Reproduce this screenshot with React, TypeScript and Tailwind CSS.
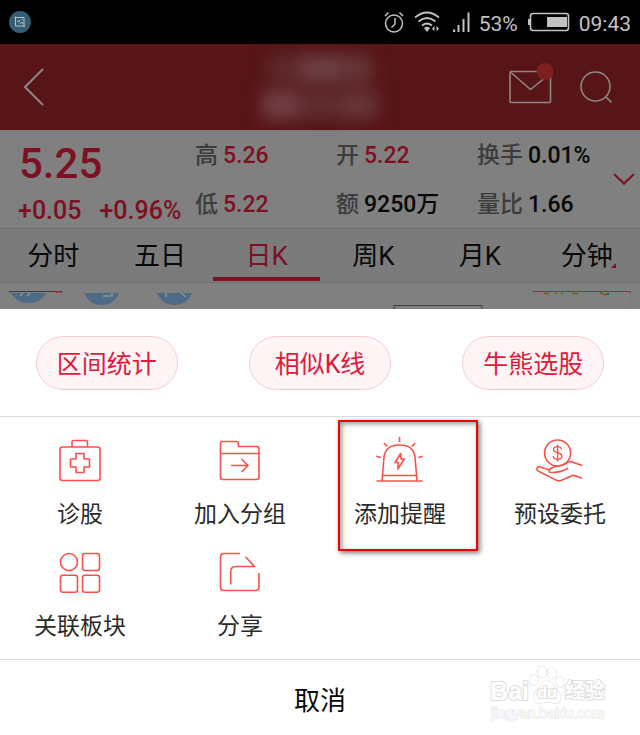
import React from "react";

const actions = [
  { id: "diagnose", label: "诊股" },
  { id: "group", label: "加入分组" },
  { id: "alert", label: "添加提醒", highlighted: true },
  { id: "order", label: "预设委托" },
  { id: "blocks", label: "关联板块" },
  { id: "share", label: "分享" },
];

const quotes = [
  { label: "高", value: "5.26", up: true },
  { label: "开", value: "5.22", up: true },
  { label: "换手", value: "0.01%", up: false },
  { label: "低", value: "5.22", up: true },
  { label: "额", value: "9250万", up: false },
  { label: "量比", value: "1.66", up: false },
];

const tabs = ["分时", "五日", "日K", "周K", "月K", "分钟"];

const shortcuts = ["区间统计", "相似K线", "牛熊选股"];

const ActionIcon = ({ id }: { id: string }) => (
  <svg
    viewBox="0 0 48 48"
    className="w-12 h-12 overflow-visible"
    fill="none"
    stroke="#fb5048"
    strokeWidth="1.6"
    strokeLinejoin="round"
    aria-hidden="true"
  >
    {id === "diagnose" && (
      <>
        <rect x="4" y="10" width="40" height="33.5" rx="2.5" />
        <path d="M16 10V5q0-1.500 1.500-1.500h12.500q1.500 0 1.500 1.500v5" />
        <path d="M20 16.500h8v5.500h5.500v8H28v5.500h-8V30h-5.500v-8H20z" />
      </>
    )}
    {id === "group" && (
      <>
        <path d="M4.500 16.500V6.500q0-2 2-2h14q2 0 2 2v3h18q2.500 0 2.500 2.500v28q0 2.500-2.500 2.500H7q-2.500 0-2.500-2.500zH43" />
        <path d="M15 28.500h17M25.500 22l6.500 6.500-6.500 6.500" />
      </>
    )}
    {id === "alert" && (
      <>
        <path d="M.5 44h46M6.500 38.500h34M6 44l2-24C9 12 15 8 23.500 8S38 12 39 20l2 24" />
        <path d="M24.700 16.500l-5.700 9h3.300l-.5 6.500 6.400-10H25z" />
        <path d="M23.500 0v5M8 6l3 3.500M39 6l-3 3.500M.3 19.300l4.400 1.200M46.700 19.300l-4.400 1.200" />
      </>
    )}
    {id === "order" && (
      <>
        <circle cx="21.6" cy="16" r="13" />
        <path
          d="M25.700 12.600c-.3-2-2-3-4.200-3s-4 1-4 3c0 4.200 8.400 2 8.400 6.500 0 2.100-1.900 3.300-4.200 3.300s-4.300-1.100-4.500-3.400M21.600 7.500v17"
          strokeWidth="1.4"
        />
        <path d="M46.300 28.500L34.500 24.500c-3 0-4.500 2-7.500 3.300-4 1.200-8 1.200-11.500 3.200-2.500 1.600-3 4-1.500 4.300 7 .7 13-1 18-4" />
        <path d="M13.500 33L3.500 29.700c-2.500-.5-3.500 2.500-1.800 4L19 42.600c2.500 1.500 3.500 1.800 6 .9L36 38.700c1.500-.5 2.500-.4 4 .2l6 2.400" />
      </>
    )}
    {id === "blocks" && (
      <>
        <circle cx="13" cy="13" r="8.500" />
        <rect x="26.500" y="4.500" width="17" height="17" rx="2.500" />
        <rect x="4.500" y="26.200" width="17" height="17" rx="2.500" />
        <rect x="26.500" y="26.200" width="17" height="17" rx="2.500" />
      </>
    )}
    {id === "share" && (
      <>
        <path d="M24 4.500H7.500q-3 0-3 3v31q0 3 3 3h32.500q3 0 3-3V24" />
        <path d="M29.500 7.700l9 9.800H20q-5.300 0-5.300 5.300v12.700" />
      </>
    )}
  </svg>
);

const StatusBar = () => (
  <div className="flex items-center h-11 px-[9px] bg-black text-[#c2c2c2]">
    <svg viewBox="0 0 22 22" className="w-[22px] h-[22px]" fill="none" aria-hidden="true">
      <circle cx="11" cy="11" r="11" fill="#355e74" />
      <path
        d="M6.500 5.500v9.500h9.500M5.500 6.500h9.500v9.500M8 10l2 1 1-2M11 13l2-2 1 2M12.500 8.500h1"
        stroke="#b5c2c8"
      />
    </svg>
    <div className="flex items-center ml-auto">
      <svg viewBox="0 0 20 22" className="w-5 h-[22px]" fill="none" stroke="currentColor" strokeWidth="1.5" aria-hidden="true">
        <circle cx="10" cy="12.500" r="8.500" />
        <path d="M11 7v6l-3.500 3.500M1 5l3.500-3.500M19 5l-3.500-3.500" />
      </svg>
      <svg viewBox="0 0 26 22" className="w-[26px] h-[22px] ml-[10px]" fill="none" stroke="currentColor" strokeWidth="1.7" aria-hidden="true">
        <path d="M1 6.500Q13-3.500 25 6.500M4.500 10.500Q13 3.500 21.500 10.500M8 14.500q5-4 10 0" />
        <path d="M10 17q3-2.500 6 0l-3 4zM18 18l2.500-3.500V20zM22.500 15v5.500l2.500-3z" fill="currentColor" stroke="none" />
      </svg>
      <svg viewBox="0 0 18 22" className="w-[18px] h-[22px] ml-3" fill="currentColor" aria-hidden="true">
        <path d="M1 18.500h2.200V21H1zM5.500 14h2v7h-2zM10.500 8h2v13h-2zM15.500 1.500h2V21h-2z" />
      </svg>
      <span className="ml-[9px] text-[21px] leading-6 mt-[3px]">53%</span>
      <svg viewBox="0 0 42 20" className="w-[42px] h-5 ml-[10px]" aria-hidden="true">
        <rect x="2.500" y="1.500" width="38" height="17" rx="2.500" fill="none" stroke="currentColor" strokeWidth="1.600" />
        <path d="M0 7h2v6H0zM19 5h20v10H19z" fill="currentColor" />
      </svg>
      <span className="ml-[9px] text-[21px] leading-6 mt-[3px]">09:43</span>
    </div>
  </div>
);

const Header = () => (
  <header className="flex items-center justify-between h-[86px] pl-6 pr-7 bg-[#571517] text-[#8f8585]">
    <button aria-label="返回" className="w-[109px]">
      <svg viewBox="0 0 20 38" className="w-5 h-[38px]" fill="none" stroke="currentColor" strokeWidth="2">
        <path d="M19 1L1 19l18 18" />
      </svg>
    </button>
    {/* Masked stock name */}
    <div className="flex flex-col items-center gap-2 blur-[8px]" aria-hidden="true">
      <div className="flex">
        <div className="w-8 h-7 bg-[#5f2a2d]" />
        <div className="w-10 h-7 bg-[#6c4044]" />
        <div className="w-8 h-7 bg-[#653639]" />
      </div>
      <div className="flex">
        <div className="w-9 h-7 bg-[#704044]" />
        <div className="w-11 h-7 bg-[#602d30]" />
        <div className="w-9 h-7 bg-[#673639]" />
      </div>
    </div>
    <div className="flex items-center gap-[27px]">
      <button aria-label="消息">
        <svg viewBox="0 0 46 50" className="w-[46px] h-[50px]" fill="none" stroke="currentColor" strokeWidth="1.600">
          <rect x="3" y="9.500" width="40.500" height="31" rx="1" />
          <path d="M4 10.500l19.500 17L42 12.500" />
          <circle cx="38" cy="9.500" r="8.500" fill="#7e1f20" stroke="none" />
        </svg>
      </button>
      <button aria-label="搜索">
        <svg viewBox="0 0 32 32" className="w-8 h-8" fill="none" stroke="currentColor" strokeWidth="1.600">
          <circle cx="15.500" cy="15.500" r="14.500" />
          <path d="M26 26l5.500 5.500" />
        </svg>
      </button>
    </div>
  </header>
);

const Quote = () => (
  <section className="grid grid-cols-[195fr_418fr_27fr] grid-rows-[98px] h-[98px] bg-[#808080] font-medium text-[#7d1023]">
    <div className="pt-[9px]">
      <div className="pl-[19px] text-[42px] leading-[50px]">5.25</div>
      <div className="flex gap-[18px] pl-[18px] text-[25px] leading-[44px]">
        <span>+0.05</span>
        <span>+0.96%</span>
      </div>
    </div>
    <div className="grid grid-cols-[141fr_141fr_136fr] content-start pt-px">
      {quotes.map((item) => (
        <div key={item.label} className="text-[23px] leading-[49px] h-[49px] whitespace-nowrap">
          <span className="mr-[5px] text-[#3c3c3c]">{item.label}</span>
          <span className={item.up ? "" : "text-[#080808]"}>{item.value}</span>
        </div>
      ))}
    </div>
    <button aria-label="展开" className="self-center">
      <svg viewBox="0 0 22 12" className="w-[22px] h-3" fill="none" stroke="currentColor" strokeWidth="2">
        <path d="M1 1l10 9.500L21 1" />
      </svg>
    </button>
  </section>
);

const Tabs = () => (
  <nav className="grid grid-cols-6 h-[55px] border-y border-[#727272] bg-[#7b7b7b]">
    {tabs.map((tab) => (
      <button
        key={tab}
        className={`relative pt-0.5 text-[26px] leading-[51px] ${
          tab === "日K" ? "text-[#7d1023]" : "text-[#080808]"
        }`}
      >
        {tab}
        {tab === "日K" && (
          <span className="absolute inset-x-0 bottom-px h-1 bg-[#7d1023]" />
        )}
        {tab === "分钟" && (
          <svg viewBox="0 0 5 5" className="absolute right-6 bottom-[14px] w-[5px] h-[5px]" fill="#7d1023">
            <path d="M5 0v5H0z" />
          </svg>
        )}
      </button>
    ))}
  </nav>
);

// Only the top edge of the chart is visible above the sheet
const ChartStrip = () => (
  <div className="flex justify-between h-[26px] px-[9px] bg-[#808080]" aria-hidden="true">
    <svg viewBox="0 0 200 26" className="w-[200px] h-[26px]" fill="none">
      <path d="M0 10V8.500h53V10" stroke="#3e3e3e" />
      <path d="M47 9h4" stroke="#a03224" strokeWidth="2" />
      <g fill="#4d6a87">
        <path d="M2 10h35q-5 10-17.500 10T2 10zM75 10h35q-5 12-17.500 12T75 10zM148 10h35q-5 12-17.500 12T148 10z" />
      </g>
      <path d="M14 10l-3 3M21 10l-3 3M94 13h9v-3M157 10v4M172 10l5 4" stroke="#8e9499" strokeWidth="1.500" />
    </svg>
    <svg viewBox="0 0 90 26" className="w-[90px] h-[26px] ml-[134px]" fill="none">
      <path d="M1 26v-3.500h88V26" stroke="#404040" />
    </svg>
    <svg viewBox="0 0 98 26" className="w-[98px] h-[26px]" fill="none">
      <path d="M.5 10V8.500h97V10" stroke="#803846" />
      <path d="M97.500 10v12" stroke="#7a7a7a" />
      <path d="M11 10.500h5M22 10.500h2M28 10.500h2M39 10.500h6M67 10l7 2" stroke="#8b5014" strokeWidth="1.500" />
      <path d="M75 10v2" stroke="#21633c" strokeWidth="2" />
    </svg>
  </div>
);

const Watermark = () => (
  <div className="absolute right-[35px] bottom-[14px] flex flex-col items-center font-['Liberation_Sans','Noto_Sans_CJK_SC',sans-serif] text-white [paint-order:stroke] [-webkit-text-stroke:2px_#dedede]">
    <div className="flex items-center text-[25px] leading-7 font-bold">
      <span>Bai</span>
      <span className="relative flex items-end justify-center w-9 h-10 -mt-3">
        <svg viewBox="0 0 36 40" className="absolute inset-0 w-9 h-10" fill="#fff" stroke="#dedede" strokeWidth="1.200" aria-hidden="true">
          <ellipse cx="5" cy="15" rx="4" ry="5.500" />
          <ellipse cx="13" cy="7" rx="4.500" ry="6" />
          <ellipse cx="23" cy="8" rx="4.500" ry="6" />
          <ellipse cx="31" cy="17" rx="4" ry="5.500" />
          <path d="M18 16c5 0 6 5 10 9 7 7 4 14-3 13-4-1-9-1-13 0-8 1-10-7-4-13 5-5 5-9 10-9z" />
        </svg>
        <span className="relative text-[16px] leading-6">du</span>
      </span>
      <span className="text-[20px] leading-7">经验</span>
    </div>
    <div className="text-[14px] leading-4 [-webkit-text-stroke:1px_#dedede]">jingyan.baidu.com</div>
  </div>
);

export default function App() {
  return (
    <main className="relative w-full bg-white font-['Roboto','Noto_Sans_CJK_SC',sans-serif]">
      <StatusBar />
      <Header />
      <Quote />
      <Tabs />
      <ChartStrip />

      {/* Bottom sheet */}
      <section className="bg-white">
        <div className="grid grid-cols-3 justify-items-center pt-[27px] pb-[26px]">
          {shortcuts.map((label) => (
            <button
              key={label}
              className="w-[142px] h-[54px] pt-1 rounded-full border border-[#f9ccd3] bg-[#fff4f6] text-[#e01a3a] text-[25px] leading-[48px]"
            >
              {label}
            </button>
          ))}
        </div>

        <div className="grid grid-cols-4 gap-y-[18px] pt-5 pb-4 border-y border-[#dcdcdc]">
          {actions.map((action) => (
            <button key={action.id} className="relative flex flex-col items-center gap-[14px] text-[#2b2b2b]">
              <ActionIcon id={action.id} />
              <span className="text-[23px] leading-8">{action.label}</span>
              {action.highlighted && (
                <span className="absolute left-[18px] right-[2px] -top-[17px] -bottom-5 border-2 border-[#f00000] shadow-[2px_2px_5px_#777,inset_2px_2px_5px_#999]" />
              )}
            </button>
          ))}
        </div>

        <button className="block w-full h-[75px] pt-2 text-[26px] leading-[67px] text-[#080808]">
          取消
        </button>
      </section>
      <Watermark />
    </main>
  );
}
